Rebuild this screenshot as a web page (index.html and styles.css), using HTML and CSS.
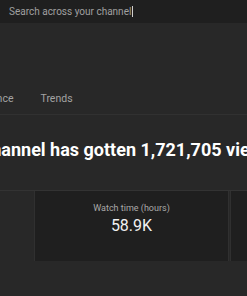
FILE: index.html
```html
<!DOCTYPE html>
<html>
<head>
  <meta charset="UTF-8">
  <title>Channel analytics</title>
  <link rel="stylesheet" href="styles.css">
</head>
<body>
  <div class="search-bar">
    <span class="search-text">Search across your channel</span><span class="caret"></span>
  </div>

  <div class="content">
    <div class="tabs">
      <span class="tab">Audience</span>
      <span class="tab">Trends</span>
    </div>

    <h1 class="title">Your channel has gotten 1,721,705 views in the last 28 days</h1>

    <div class="metrics">
      <div class="metric metric-first"></div>
      <div class="metric">
        <div class="metric-label">Watch time (hours)</div>
        <div class="metric-value">58.9K</div>
      </div>
      <div class="metric metric-last"></div>
    </div>
  </div>
</body>
</html>
```

FILE: styles.css
```css
body {
  margin: 0;
  background-color: #282828;
  font-family: Roboto, "Liberation Sans", Arial, sans-serif;
  overflow: hidden;
  width: 247px;
  height: 296px;
}

.search-bar {
  height: 23px;
  background-color: #1f1f1f;
  display: flex;
  align-items: center;
  padding-left: 9px;
}

.search-text {
  color: #a0a0a0;
  font-size: 10px;
}

.caret {
  display: inline-block;
  width: 1px;
  height: 11px;
  margin-left: 1px;
  background-color: #cfcfcf;
}

.content {
  margin-left: -30px;
  width: 400px;
  overflow: hidden;
}

.tabs {
  display: flex;
  gap: 27px;
  padding-top: 69px;
  height: 22px;
  border-bottom: 1px solid #313131;
  color: #a3a3a3;
  font-size: 10.5px;
}

.title {
  margin: 24px 0 0 -30px;
  color: #ffffff;
  font-size: 18px;
  font-weight: bold;
  white-space: nowrap;
  line-height: 22px;
}

.metrics {
  display: flex;
  margin-top: 29px;
  border-top: 1px solid #333333;
}

.metric {
  flex: 0 0 193px;
  height: 70px;
  background-color: #1f1f1f;
  border-left: 1px solid #303030;
  border-right: 1px solid #303030;
  text-align: center;
  margin-right: 1px;
}

.metric-first {
  flex-basis: 63px;
  background-color: #282828;
  border: none;
}

.metric-last {
  flex-basis: 60px;
}

.metric-label {
  margin-top: 12px;
  color: #a9a9a9;
  font-size: 9px;
}

.metric-value {
  margin-top: 3px;
  color: #f1f1f1;
  font-size: 16px;
}
```
